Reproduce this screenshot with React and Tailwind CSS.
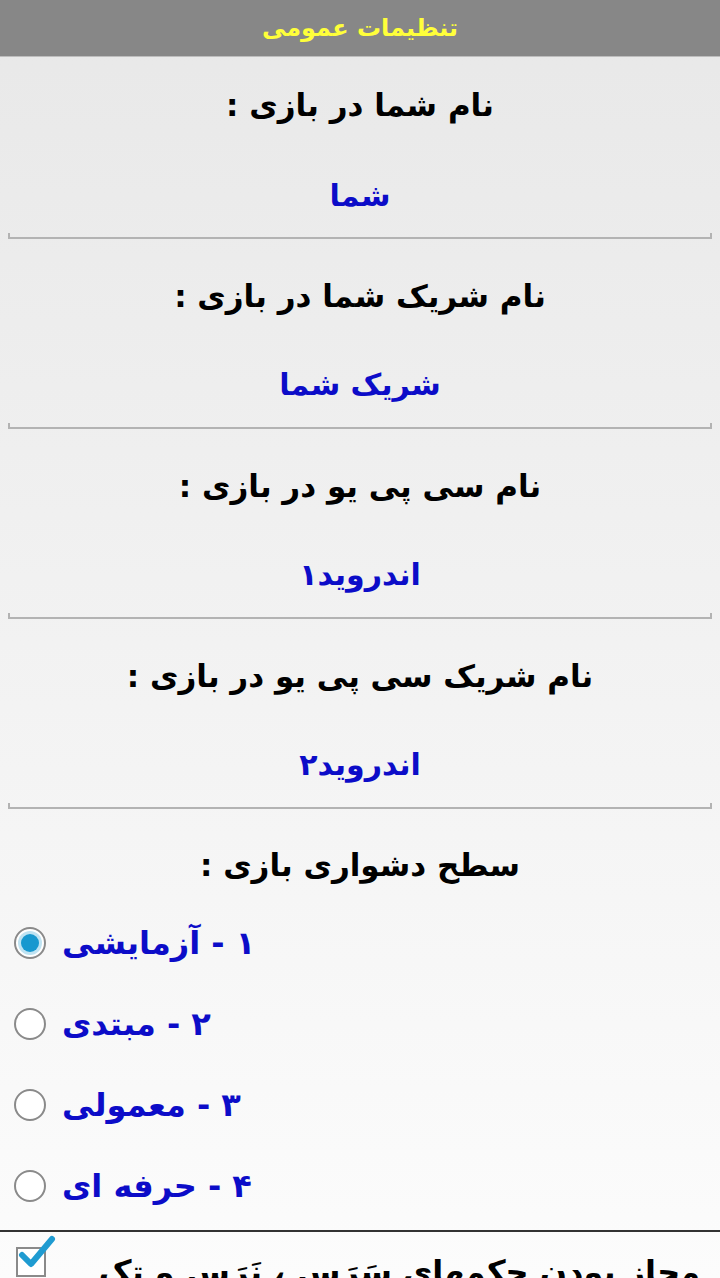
import React from 'react';

// General settings screen of a Persian card game (RTL labels, blue values).

const fields = [
  { label: 'نام شما در بازی :', value: 'شما' },
  { label: 'نام شریک شما در بازی :', value: 'شریک شما' },
  { label: 'نام سی پی یو در بازی :', value: 'اندروید۱' },
  { label: 'نام شریک سی پی یو در بازی :', value: 'اندروید۲' },
];

const levels = ['۱ - آزمایشی', '۲ - مبتدی', '۳ - معمولی', '۴ - حرفه ای'];

const font = { fontFamily: '"DejaVu Sans", "Liberation Sans", sans-serif' };

function Underline() {
  return (
    <div className="mx-[8px] h-[6px] border-x-2 border-b-2 border-[#b3b3b3]" />
  );
}

function Field({ label, value, first }) {
  return (
    <div className="flex flex-col">
      <div
        dir="rtl"
        className={`${first ? 'mt-[18px]' : 'mt-[27px]'} flex h-[60px] items-center justify-center text-[31px] font-bold text-black`}
      >
        {label}
      </div>
      <div
        dir="rtl"
        className={`${first ? 'mt-[30px]' : 'mt-[28px]'} flex h-[60px] items-center justify-center text-[30px] font-bold text-[#0c0cc8]`}
      >
        {value}
      </div>
      <div className={first ? 'mt-[8px]' : 'mt-[9px]'}>
        <Underline />
      </div>
    </div>
  );
}

function Radio({ checked }) {
  return (
    <div className="flex h-[32px] w-[32px] items-center justify-center rounded-full border-2 border-[#8a8a8a] bg-white">
      {checked && (
        <div className="flex h-[24px] w-[24px] items-center justify-center rounded-full bg-[#bfe3f2]">
          <div className="h-[18px] w-[18px] rounded-full bg-[#1798cf]" />
        </div>
      )}
    </div>
  );
}

export default function App() {
  return (
    <div
      style={font}
      className="h-[1278px] w-[720px] overflow-hidden bg-linear-to-b from-[#e8e8e8] to-[#fcfcfc]"
    >
      <div className="flex h-[57px] items-center justify-center border-b border-[#bdbdbd] bg-[#878787]">
        <span dir="rtl" className="text-[24px] font-bold text-[#ffff3a]">
          تنظیمات عمومی
        </span>
      </div>

      {fields.map((f, i) => (
        <Field key={f.label} label={f.label} value={f.value} first={i === 0} />
      ))}

      <div
        dir="rtl"
        className="mt-[26px] flex h-[60px] items-center justify-center text-[31px] font-bold text-black"
      >
        سطح دشواری بازی :
      </div>

      <div className="mt-[7px] flex flex-col">
        {levels.map((l, i) => (
          <div key={l} className="flex h-[81px] items-center gap-[16px] pl-[14px]">
            <Radio checked={i === 0} />
            <span dir="rtl" className="text-[32px] font-bold text-[#0c0cc8]">
              {l}
            </span>
          </div>
        ))}
      </div>

      <div className="mt-[4px] h-[2px] bg-[#333]" />

      <div className="flex items-start justify-between pl-[16px] pr-[20px]">
        <div className="relative mt-[15px] h-[30px] w-[30px] shrink-0 border-2 border-[#8a8a8a] bg-white">
          <svg
            viewBox="0 0 40 40"
            className="absolute left-[-2px] top-[-18px] h-[40px] w-[40px]"
          >
            <path
              d="M6 24 L15 33 L36 8"
              fill="none"
              stroke="#1f9bd1"
              strokeWidth="6"
              strokeLinecap="round"
              strokeLinejoin="round"
            />
          </svg>
        </div>
        <span dir="rtl" className="mt-[10px] whitespace-nowrap text-[32px] font-bold leading-[60px] text-black">
          مجاز بودن حکمهای سَرَس ، نَرَس و تک
        </span>
      </div>
    </div>
  );
}
